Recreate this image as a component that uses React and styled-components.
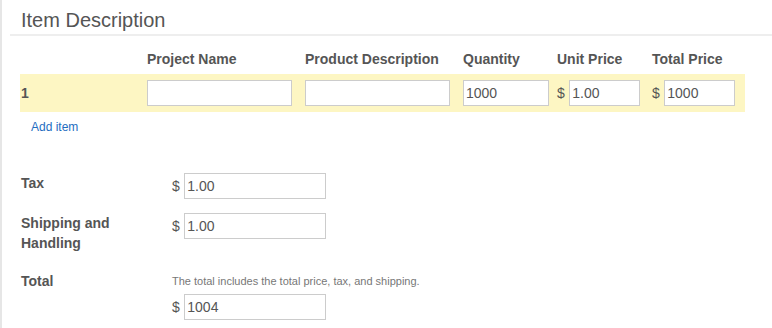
import React from "react";
import styled, { createGlobalStyle } from "styled-components";

const GlobalStyle = createGlobalStyle`
  html, body {
    margin: 0;
    padding: 0;
    background: #fff;
  }
  body {
    font-family: "Liberation Sans", Arial, sans-serif;
    color: #555;
  }
`;

const columns = "127px 158px 158px 94px 95px 93px";

const Page = styled.div`
  min-height: 100vh;
  box-sizing: border-box;
  border-left: 2px solid #e6e6e6;
  padding: 9px 0 0 8px;
`;

const Title = styled.h2`
  margin: 0;
  padding-left: 11px;
  font-size: 20px;
  line-height: 23px;
  font-weight: normal;
  color: #555;
`;

const Rule = styled.hr`
  margin: 2px 0 8px;
  border: 0;
  height: 2px;
  background: #eeeeee;
`;

const ItemGrid = styled.div`
  margin-left: 10px;
  width: 725px;
`;

const GridRow = styled.div`
  display: grid;
  grid-template-columns: ${columns};
  align-items: center;
  height: ${(p) => (p.header ? "30px" : "38px")};
  background: ${(p) => (p.highlight ? "#fdf6c3" : "transparent")};
`;

const HeadCell = styled.div`
  font-size: 14px;
  font-weight: bold;
  color: #555;
`;

const RowNumber = styled.div`
  padding-left: 1px;
  font-size: 14px;
  font-weight: bold;
  color: #555;
`;

const Cell = styled.div`
  display: flex;
  align-items: center;
`;

const TextInput = styled.input`
  box-sizing: border-box;
  width: ${(p) => p.w}px;
  height: 26px;
  margin: 0;
  padding: 0 2px;
  border: 1px solid #cccccc;
  border-radius: 0;
  background: #fff;
  font-family: "Liberation Sans", Arial, sans-serif;
  font-size: 14px;
  color: #555;
  outline: none;
`;

const Money = styled.div`
  display: flex;
  align-items: center;
  gap: 4.5px;
  font-size: 14px;
  color: #555;
`;

const AddLink = styled.a`
  display: inline-block;
  margin: 7px 0 0 21px;
  font-size: 12px;
  line-height: 16px;
  color: #1f6dbf;
  text-decoration: none;
  cursor: pointer;
`;

const Totals = styled.div`
  margin: 38px 0 0 11px;
`;

const TotalRow = styled.div`
  display: grid;
  grid-template-columns: 151px 1fr;
  align-items: start;
  margin-bottom: 14px;
`;

const Label = styled.div`
  width: 110px;
  padding-bottom: 4px;
  font-size: 14px;
  line-height: 20px;
  font-weight: bold;
  color: #555;
`;

const Field = styled.div`
  display: flex;
  flex-direction: column;
`;

const Help = styled.div`
  margin-bottom: 3px;
  font-size: 11px;
  line-height: 20px;
  color: #777;
`;

const PriceInput = ({ value, w }) => (
  <Money>
    $<TextInput w={w} defaultValue={value} />
  </Money>
);

const items = [{ id: 1, name: "", description: "", quantity: "1000", unit: "1.00", total: "1000" }];

const App = () => (
  <>
    <GlobalStyle />
    <Page>
      <Title>Item Description</Title>
      <Rule />
      <ItemGrid>
        <GridRow header>
          <div />
          <HeadCell>Project Name</HeadCell>
          <HeadCell>Product Description</HeadCell>
          <HeadCell>Quantity</HeadCell>
          <HeadCell>Unit Price</HeadCell>
          <HeadCell>Total Price</HeadCell>
        </GridRow>
        {items.map((item) => (
          <GridRow key={item.id} highlight>
            <RowNumber>{item.id}</RowNumber>
            <Cell>
              <TextInput w={145} defaultValue={item.name} />
            </Cell>
            <Cell>
              <TextInput w={145} defaultValue={item.description} />
            </Cell>
            <Cell>
              <TextInput w={86} defaultValue={item.quantity} />
            </Cell>
            <Cell>
              <PriceInput w={71} value={item.unit} />
            </Cell>
            <Cell>
              <PriceInput w={71} value={item.total} />
            </Cell>
          </GridRow>
        ))}
      </ItemGrid>
      <AddLink>Add item</AddLink>
      <Totals>
        <TotalRow>
          <Label>Tax</Label>
          <PriceInput w={142} value="1.00" />
        </TotalRow>
        <TotalRow>
          <Label>Shipping and Handling</Label>
          <PriceInput w={142} value="1.00" />
        </TotalRow>
        <TotalRow>
          <Label>Total</Label>
          <Field>
            <Help>The total includes the total price, tax, and shipping.</Help>
            <PriceInput w={142} value="1004" />
          </Field>
        </TotalRow>
      </Totals>
    </Page>
  </>
);

export default App;
